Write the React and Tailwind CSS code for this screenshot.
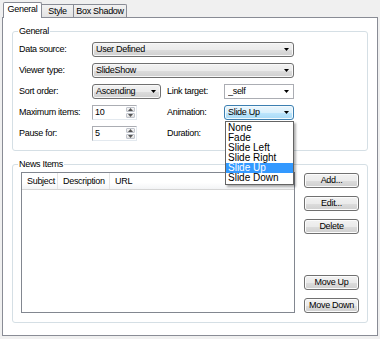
import React from 'react';

const BTN_BG = 'bg-[linear-gradient(#f2f2f2_0%,#ebebeb_50%,#dddddd_51%,#cfcfcf_100%)]';

function Arrow() {
  return (
    <svg width="5" height="3" viewBox="0 0 5 3" className="shrink-0">
      <polygon points="0,0 5,0 2.5,3" fill="#000" />
    </svg>
  );
}

// Win7 style drop-down list (non editable)
function Select({ value, className = '', variant = 'gray' }) {
  const look = {
    gray: `border-[#707070] ${BTN_BG} rounded-[3px] shadow-[inset_0_0_0_1px_#f8f8f8]`,
    white: 'border-[#abadb3] bg-white',
    focus: 'border-[#3c7fb1] rounded-[3px] bg-[linear-gradient(#eaf6fd_0%,#d9f0fc_50%,#bee6fd_51%,#a7d9f5_100%)] shadow-[inset_0_0_0_1px_#f3fafd]',
  }[variant];
  return (
    <div className={`flex h-[15px] items-center border pl-[3px] pr-[4px] ${look} ${className}`}>
      <span className="flex-1 truncate">{value}</span>
      <Arrow />
    </div>
  );
}

function Spinner({ value }) {
  return (
    <div className="flex h-[15px] w-[45px] items-stretch border border-[#abadb3] border-r-[#e3e9ef] border-b-[#e3e9ef] bg-white">
      <span className="flex-1 pl-[2px] leading-[13px]">{value}</span>
      <div className="flex w-[11px] flex-col gap-px p-px">
        <div className="flex flex-1 items-center justify-center rounded-[1px] border border-[#c0c4cc] bg-[linear-gradient(#f8f8f8,#e0e0e0)]">
          <svg width="5" height="3" viewBox="0 0 5 3"><polygon points="0,3 5,3 2.5,0" fill="#555" /></svg>
        </div>
        <div className="flex flex-1 items-center justify-center rounded-[1px] border border-[#c0c4cc] bg-[linear-gradient(#f8f8f8,#e0e0e0)]">
          <svg width="5" height="3" viewBox="0 0 5 3"><polygon points="0,0 5,0 2.5,3" fill="#555" /></svg>
        </div>
      </div>
    </div>
  );
}

function Button({ children }) {
  return (
    <div className={`flex h-[15px] w-[55px] items-center justify-center rounded-[3px] border border-[#707070] ${BTN_BG} shadow-[inset_0_0_0_1px_#fcfcfc]`}>
      {children}
    </div>
  );
}

const Label = ({ children, w = 'w-[73px]' }) => <span className={`${w} shrink-0`}>{children}</span>;

const ANIMS = ['None', 'Fade', 'Slide Left', 'Slide Right', 'Slide Up', 'Slide Down'];

export default function App() {
  return (
    <div className="h-[339px] w-[380px] bg-[#f0f0f0] px-[2px] pt-[2px] font-['Liberation_Sans',Arial,sans-serif] text-[9px] leading-none tracking-[-0.3px] text-black">
      {/* tabs */}
      <div className="relative z-10 flex h-[15px] items-end pl-px">
        <div className="-mb-px flex h-[16px] w-[39px] items-center justify-center rounded-t-[2px] border border-b-0 border-[#898c95] bg-white pb-[2px]">General</div>
        <div className="flex h-[13px] w-[32px] items-center justify-center border border-l-0 border-b-0 border-[#898c95] bg-[linear-gradient(#f2f2f2,#e3e3e3)]">Style</div>
        <div className="flex h-[13px] w-[53px] items-center justify-center rounded-tr-[2px] border border-l-0 border-b-0 border-[#898c95] bg-[linear-gradient(#f2f2f2,#e3e3e3)]">Box Shadow</div>
      </div>

      {/* tab page */}
      <div className="h-[319px] border border-[#898c95] bg-white px-[9px] pt-[8px]">
        <fieldset className="rounded-[3px] border border-[#d5dfe5] px-[6px] pb-[9px]">
          <legend className="ml-[-1px] px-px leading-[11px]">General</legend>
          <div className="flex flex-col gap-[6px] pt-[5px]">
            <div className="flex items-center">
              <Label>Data source:</Label>
              <Select value="User Defined" className="w-[202px]" />
            </div>
            <div className="flex items-center">
              <Label>Viewer type:</Label>
              <Select value="SlideShow" className="w-[202px]" />
            </div>
            <div className="flex items-center">
              <Label>Sort order:</Label>
              <Select value="Ascending" className="w-[69px]" />
              <span className="ml-[6px] w-[57px]">Link target:</span>
              <Select value="_self" variant="white" className="w-[70px]" />
            </div>
            <div className="flex items-center">
              <Label>Maximum items:</Label>
              <Spinner value="10" />
              <span className="ml-[30px] w-[57px]">Animation:</span>
              <div className="relative">
                <Select value="Slide Up" variant="focus" className="w-[70px]" />
                {/* open drop-down list */}
                <div className="absolute left-px top-[16px] z-20 w-[69px] border border-[#646464] bg-white py-px tracking-normal shadow-[2px_2px_2px_rgba(0,0,0,0.3)]">
                  {ANIMS.map(a => (
                    <div key={a} className={`h-[10px] pl-[2px] text-[10px] leading-[10px] ${a === 'Slide Up' ? 'bg-[#3399ff] text-white' : ''}`}>{a}</div>
                  ))}
                </div>
              </div>
            </div>
            <div className="flex h-[15px] items-center">
              <Label>Pause for:</Label>
              <Spinner value="5" />
              <span className="ml-[30px] w-[57px]">Duration:</span>
            </div>
          </div>
        </fieldset>

        <fieldset className="mt-[8px] rounded-[3px] border border-[#d5dfe5] px-[8px] pb-[9px]">
          <legend className="ml-[-3px] px-px leading-[11px]">News Items</legend>
          <div className="flex pt-[2px]">
            <div className="h-[141px] flex-1 border border-[#828790] bg-white">
              <div className="flex h-[17px] items-center border-b border-[#d5d5d5] bg-[linear-gradient(#ffffff_0%,#ffffff_60%,#f3f4f6_100%)]">
                <span className="flex h-full w-[36px] items-center border-r border-[#e5e5e5] pl-[5px]">Subject</span>
                <span className="flex h-full w-[52px] items-center border-r border-[#e5e5e5] pl-[5px]">Description</span>
                <span className="pl-[5px]">URL</span>
              </div>
            </div>
            <div className="ml-[9px] flex flex-col justify-between pt-px">
              <div className="flex flex-col gap-[8px]">
                <Button>Add...</Button>
                <Button>Edit...</Button>
                <Button>Delete</Button>
              </div>
              <div className="flex flex-col gap-[8px]">
                <Button>Move Up</Button>
                <Button>Move Down</Button>
              </div>
            </div>
          </div>
        </fieldset>
      </div>
    </div>
  );
}
